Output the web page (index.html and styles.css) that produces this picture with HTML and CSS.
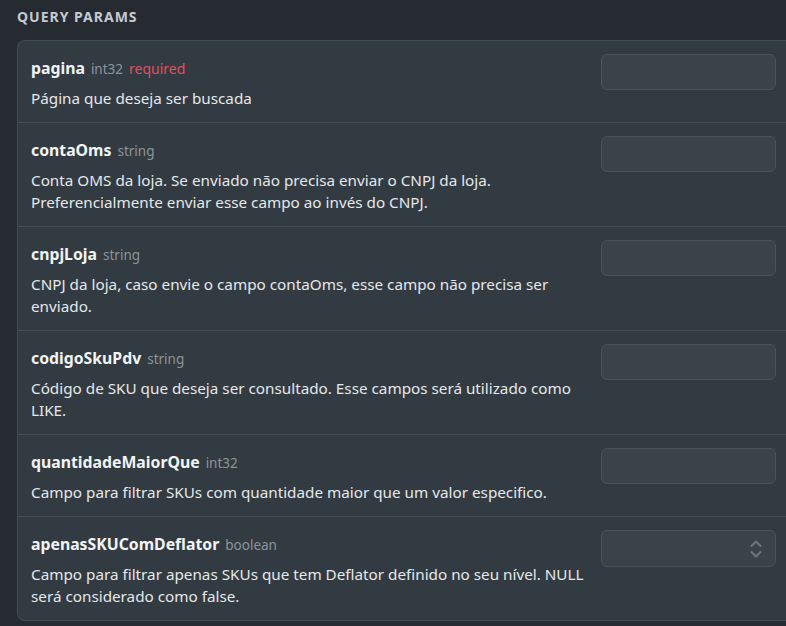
FILE: index.html
```html
<!DOCTYPE html>
<html lang="pt-BR">
<head>
    <meta charset="UTF-8">
    <meta name="viewport" content="width=device-width, initial-scale=1.0">
    <title>Query Params</title>
    <link rel="stylesheet" href="styles.css">
</head>
<body>
    <section class="params">
        <h3 class="params-title">QUERY PARAMS</h3>

        <div class="param-list">
            <div class="param">
                <div class="param-info">
                    <div class="param-head">
                        <span class="param-name">pagina</span>
                        <span class="param-type">int32</span>
                        <span class="param-required">required</span>
                    </div>
                    <p class="param-desc">Página que deseja ser buscada</p>
                </div>
                <input class="param-input" type="text">
            </div>

            <div class="param">
                <div class="param-info">
                    <div class="param-head">
                        <span class="param-name">contaOms</span>
                        <span class="param-type">string</span>
                    </div>
                    <p class="param-desc">Conta OMS da loja. Se enviado não precisa enviar o CNPJ da loja. Preferencialmente enviar esse campo ao invés do CNPJ.</p>
                </div>
                <input class="param-input" type="text">
            </div>

            <div class="param">
                <div class="param-info">
                    <div class="param-head">
                        <span class="param-name">cnpjLoja</span>
                        <span class="param-type">string</span>
                    </div>
                    <p class="param-desc">CNPJ da loja, caso envie o campo contaOms, esse campo não precisa ser enviado.</p>
                </div>
                <input class="param-input" type="text">
            </div>

            <div class="param">
                <div class="param-info">
                    <div class="param-head">
                        <span class="param-name">codigoSkuPdv</span>
                        <span class="param-type">string</span>
                    </div>
                    <p class="param-desc">Código de SKU que deseja ser consultado. Esse campos será utilizado como LIKE.</p>
                </div>
                <input class="param-input" type="text">
            </div>

            <div class="param">
                <div class="param-info">
                    <div class="param-head">
                        <span class="param-name">quantidadeMaiorQue</span>
                        <span class="param-type">int32</span>
                    </div>
                    <p class="param-desc">Campo para filtrar SKUs com quantidade maior que um valor especifico.</p>
                </div>
                <input class="param-input" type="text">
            </div>

            <div class="param">
                <div class="param-info">
                    <div class="param-head">
                        <span class="param-name">apenasSKUComDeflator</span>
                        <span class="param-type">boolean</span>
                    </div>
                    <p class="param-desc">Campo para filtrar apenas SKUs que tem Deflator definido no seu nível. NULL será considerado como false.</p>
                </div>
                <div class="param-select">
                    <svg class="select-arrows" width="14" height="22" viewBox="0 0 14 22" fill="none" stroke="#6c747b" stroke-width="2.2" stroke-linecap="round" stroke-linejoin="round">
                        <path d="M2.5 8 L7 3.5 L11.5 8"/>
                        <path d="M2.5 14 L7 18.5 L11.5 14"/>
                    </svg>
                </div>
            </div>
        </div>
    </section>
</body>
</html>
```

FILE: styles.css
```css
body {
    margin: 0;
    padding: 0;
    background: #262b32;
    font-family: 'Noto Sans', 'Open Sans', sans-serif;
    color: #e8eaec;
}

.params {
    padding: 6px 0 0 17px;
}

.params-title {
    margin: 0 0 12px;
    font-size: 14px;
    font-weight: 700;
    line-height: 22px;
    letter-spacing: 1px;
    color: #c3cad1;
}

.param-list {
    background: #323b41;
    border: 1px solid #434c53;
    border-right: none;
    border-radius: 8px 0 0 8px;
}

.param {
    display: flex;
    align-items: flex-start;
    gap: 12px;
    padding: 13px 10px 13px 13px;
    border-bottom: 1px solid #434c53;
}

.param:last-child {
    border-bottom: none;
}

.param-info {
    flex: 1;
    padding-top: 3px;
}

.param-head {
    display: flex;
    align-items: baseline;
    gap: 6px;
    line-height: 22px;
}

.param-name {
    font-size: 15.8px;
    font-weight: 700;
    color: #f2f4f5;
}

.param-type {
    font-size: 13.5px;
    color: #8c949b;
}

.param-required {
    font-size: 14px;
    color: #e0505e;
}

.param-desc {
    margin: 7px 0 0;
    font-size: 15.25px;
    line-height: 22px;
    color: #e6e8ea;
}

.param-input,
.param-select {
    flex: none;
    box-sizing: border-box;
    width: 175px;
    height: 36px;
    margin: 0;
    padding: 0 10px;
    background: #3b4249;
    border: 1px solid #4a535a;
    border-radius: 6px;
    outline: none;
}

.param-select {
    display: flex;
    align-items: center;
    justify-content: flex-end;
    height: 37px;
    padding-right: 12px;
}
```
